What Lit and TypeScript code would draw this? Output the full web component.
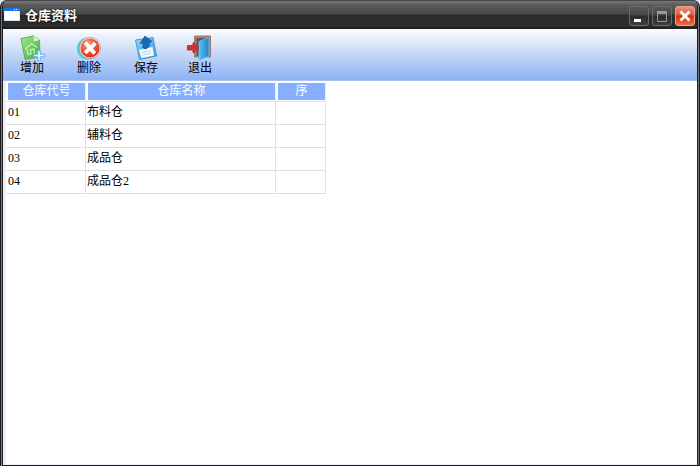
import { LitElement, html, css, svg } from "lit";
import { customElement } from "lit/decorators.js";

const addIcon = svg`
  <defs><linearGradient id="leaf" x1="0" y1="0" x2="1" y2="1">
    <stop offset="0" stop-color="#a9e58c"/><stop offset="1" stop-color="#3aab40"/></linearGradient></defs>
  <path d="M2 3.5 L14.5 1 L20.5 5 L21 22 L6 24.5 Z" fill="url(#leaf)" stroke="#5cb45c" stroke-width="1"/>
  <path d="M14.5 1 L15 6.5 L20.5 5 Z" fill="#d9f6cb"/>
  <path d="M6.5 14 L12.5 8.5 L18 12.5 M8 14 L9 19.5 L12 19 L11.5 14.5 L15 14 L15.5 18" fill="none" stroke="#c7f2bb" stroke-width="1.3"/>
  <path d="M18.7 15.5 h2.6 v3.7 h4 v2.6 h-4 v4 h-2.6 v-4 h-4 v-2.6 h4 z" fill="#e4f4ff" stroke="#62aeea" stroke-width="1"/>`;

const deleteIcon = svg`
  <defs><radialGradient id="disc" cx="0.4" cy="0.3" r="0.8">
    <stop offset="0" stop-color="#ff9a78"/><stop offset="0.6" stop-color="#ee4a2c"/><stop offset="1" stop-color="#c92a17"/></radialGradient></defs>
  <circle cx="12" cy="13.5" r="11" fill="#3fd0dc"/>
  <circle cx="14" cy="13" r="10.7" fill="#f4e0e0" stroke="#b88c98" stroke-width="0.7"/>
  <circle cx="14" cy="13" r="9.5" fill="url(#disc)"/>
  <path d="M10.5 9 L17.5 17 M18 9.5 L10.5 16.5" stroke="#fff" stroke-width="3.8" stroke-linecap="square"/>`;

const saveIcon = svg`
  <defs><linearGradient id="disk" x1="0" y1="0" x2="1" y2="1">
    <stop offset="0" stop-color="#8fd8fb"/><stop offset="1" stop-color="#3298dd"/></linearGradient></defs>
  <path d="M2.5 5 L20 2.5 L23.5 21 L6.5 24.5 Z" fill="url(#disk)" stroke="#469bd2" stroke-width="1"/>
  <path d="M6 15 L19.5 12 L21 20.5 L8.5 23 Z" fill="#f7fbff"/>
  <path d="M9 17.5 L18 15.7 M9.5 20 L18.5 18.2" stroke="#b9ccda" stroke-width="1"/>
  <path d="M12 1 L19 6.5 L16.5 7.2 Q17.5 12 12.5 14 L9.5 12.5 L10.5 8.5 L7 8.5 Z" fill="#1769b8" stroke="#104f96" stroke-width="0.6"/>`;

const exitIcon = svg`
  <defs><linearGradient id="door" x1="0" y1="0" x2="1" y2="0">
    <stop offset="0" stop-color="#59c0f5"/><stop offset="1" stop-color="#1c82cc"/></linearGradient></defs>
  <path d="M7.5 1 H23.5 V22 H7.5 Z" fill="#b98063" stroke="#94644f" stroke-width="0.8"/>
  <path d="M9.5 3 H21.5 V21 H9.5 Z" fill="#4c5d70"/>
  <path d="M12 6.5 L22 2.5 V21 L12 25.5 Z" fill="url(#door)" stroke="#79cdf5" stroke-width="0.7"/>
  <path d="M0.5 10.5 H6 V7.5 L12 12.7 L6 18 V15 H0.5 Z" fill="#dc2d31" stroke="#a9232c" stroke-width="0.8"/>`;

const columns = ["仓库代号", "仓库名称", "序"];
const rows = [
  ["01", "布料仓", ""],
  ["02", "辅料仓", ""],
  ["03", "成品仓", ""],
  ["04", "成品仓2", ""],
];

@customElement("app-root")
export class AppRoot extends LitElement {
  static styles = css`
    * { box-sizing: border-box; }
    :host {
      display: block;
      background: #dfe3f4;
      font: 12px/16px "Liberation Serif", "Noto Sans CJK SC", serif;
      color: #000;
    }
    .window {
      display: flex;
      flex-direction: column;
      min-height: 100vh;
      border: double #1c1c1f;
      border-width: 0 3px 1px;
      border-radius: 7px 7px 0 0;
      background: #777;
      overflow: hidden;
    }
    .title-bar {
      display: flex;
      align-items: center;
      height: 29px;
      padding: 1px 2px 0 1px;
      gap: 5px;
      border-top: 1px solid #454545;
      border-bottom: 2px solid #221f20;
      background: linear-gradient(#777 0, #5b5b5b 4px, #484848 13px, #2b2b2b 14px, #2d2d2d 100%);
    }
    .title-bar h1 {
      flex: 1;
      margin: 0;
      padding-top: 2px;
      color: #fff;
      font: bold 13px/18px "Liberation Sans", "Noto Sans CJK SC", sans-serif;
      text-shadow: 0 0 2px #000;
    }
    .app-icon { width: 16px; height: 13px; flex: none; }
    .controls { display: flex; gap: 3px; padding-top: 3px; }
    .control {
      display: block;
      width: 20px;
      height: 20px;
      padding: 0;
      border: 1px solid #6c6c6c;
      border-radius: 3px;
      background: linear-gradient(#575757, #464646 45%, #2c2c2c 50%, #3c3c3c);
    }
    .control svg { display: block; width: 18px; height: 18px; }
    .close {
      border-color: #ed9d8b;
      background: linear-gradient(#ee8d77, #e4573a 45%, #d92c0b 50%, #ef6c4c);
    }
    .toolbar {
      display: flex;
      gap: 28px;
      height: 52px;
      padding: 6px 16px 0;
      border-bottom: 1px solid #a4c1f8;
      background: linear-gradient(#fbfcff, #d5e2f8 35%, #8bb2f5);
    }
    .group { display: flex; gap: 31px; }
    .tool {
      display: flex;
      flex-direction: column;
      align-items: center;
      width: 26px;
      padding: 0;
      border: 0;
      background: none;
      color: #000;
      font: 12px/14px "Liberation Sans", "Noto Sans CJK SC", sans-serif;
      white-space: nowrap;
    }
    .tool svg { display: block; width: 26px; height: 26px; flex: none; }
    .content {
      flex: 1;
      padding-top: 1px;
      border-left: 3px solid #eeeeff;
      border-bottom: 1px solid #eeeeff;
      background: #fff;
    }
    table { width: 320px; table-layout: fixed; border-collapse: separate; border-spacing: 0; }
    .code { width: 80px; }
    .name { width: 190px; }
    .order { width: 50px; }
    th { height: 20px; padding: 1px 0 1px 2px; border-right: 1px solid #eee; border-bottom: 1px solid #e0e0e0; font-weight: normal; }
    th span { display: block; height: 17px; background: #88aeff; color: #fff; line-height: 17px; }
    td { height: 23px; padding: 0 0 2px 1px; border-right: 1px solid #e2e2e2; border-bottom: 1px solid #dedede; }
    td:first-child { padding-left: 2px; }
  `;

  private tool(label: string, icon: unknown) {
    return html`<button class="tool" type="button">
      <svg viewBox="0 0 26 26" aria-hidden="true">${icon}</svg>${label}
    </button>`;
  }

  render() {
    return html`
      <main class="window">
        <header class="title-bar">
          <svg class="app-icon" viewBox="0 0 16 13" aria-hidden="true">
            <rect width="16" height="13" fill="#d7e8fb"/>
            <rect x="1" y="3" width="14" height="9" fill="#fff"/>
            <rect width="16" height="3" fill="#1976e0"/>
            <path d="M10 1h1v1h-1zM12 1h1v1h-1z" fill="#fff"/>
            <rect x="14" y="1" width="1" height="1" fill="#f08050"/>
          </svg>
          <h1>仓库资料</h1>
          <div class="controls">
            <button class="control" type="button" aria-label="最小化">
              <svg viewBox="0 0 18 18"><rect x="4" y="12" width="7" height="3" fill="#fff"/></svg>
            </button>
            <button class="control" type="button" aria-label="最大化">
              <svg viewBox="0 0 18 18"><path d="M4.5 5v9.5h9V5" fill="none" stroke="#999"/><rect x="4" y="4" width="10" height="3" fill="#999"/></svg>
            </button>
            <button class="control close" type="button" aria-label="关闭">
              <svg viewBox="0 0 18 18"><path d="M4.5 4.5l9 9M13.5 4.5l-9 9" stroke="#fff" stroke-width="2.8"/></svg>
            </button>
          </div>
        </header>
        <nav class="toolbar">
          <div class="group">
            ${this.tool("增加", addIcon)}${this.tool("删除", deleteIcon)}${this.tool("保存", saveIcon)}
          </div>
          ${this.tool("退出", exitIcon)}
        </nav>
        <section class="content">
          <table>
            <colgroup><col class="code"><col class="name"><col class="order"></colgroup>
            <thead><tr>${columns.map((c) => html`<th scope="col"><span>${c}</span></th>`)}</tr></thead>
            <tbody>${rows.map((r) => html`<tr>${r.map((v) => html`<td>${v}</td>`)}</tr>`)}</tbody>
          </table>
        </section>
      </main>`;
  }
}
